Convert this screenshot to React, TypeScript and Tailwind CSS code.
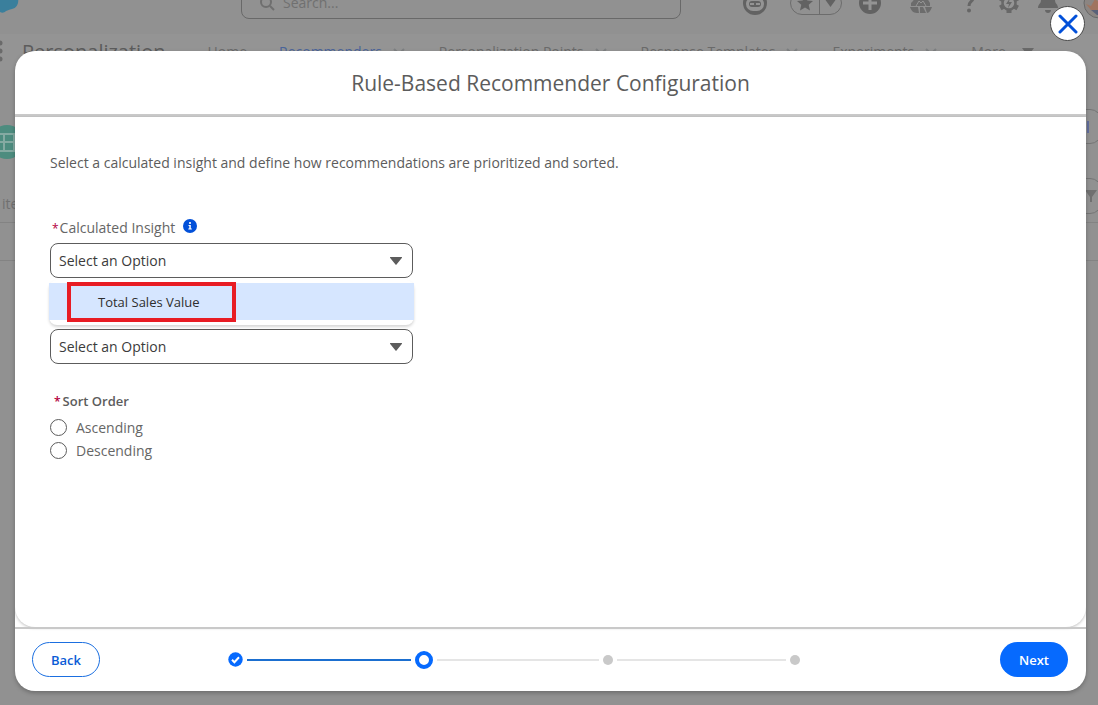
import React, { useState } from "react";

function Chevron() {
  return (
    <svg className="h-4 w-4 shrink-0" viewBox="0 0 16 16" fill="none" stroke="#7e8082" strokeWidth="2">
      <path d="M3 5l5 5 5-5" />
    </svg>
  );
}

function NavItem({ label, menu = true, active = false }: { label: string; menu?: boolean; active?: boolean }) {
  return (
    <a
      href="#"
      tabIndex={-1}
      className={
        active
          ? "flex shrink-0 items-center gap-[9px] text-sm text-[#4a649a]"
          : "flex shrink-0 items-center gap-[9px] text-sm text-[#6a6a6a]"
      }
    >
      {label}
      {menu && <Chevron />}
    </a>
  );
}

function GlobalHeader() {
  return (
    <header className="relative flex h-[62px] items-center justify-between pr-1 pl-[241px] text-[#626262]">
      <svg className="absolute top-[14px] left-0 h-7 w-5" viewBox="0 0 20 28">
        <path d="M0 12h18c1 5-1 10-6 11-3 1-4 1-6 2-2 2-4 2-6 1z" fill="#3a7f9c" />
      </svg>
      <div className="flex h-8 w-[440px] items-center gap-2 rounded-lg border border-[#696969] px-[17px]">
        <svg className="h-4 w-4 shrink-0" viewBox="0 0 16 16" fill="none" stroke="#6f6f6f" strokeWidth="2">
          <circle cx="7" cy="7" r="5" />
          <path d="M11 11l4 4" />
        </svg>
        <input
          aria-label="Search"
          tabIndex={-1}
          placeholder="Search..."
          className="w-full bg-transparent text-sm outline-none placeholder:text-[#707070]"
        />
      </div>
      <div className="flex items-center">
        <svg className="mr-[22px] h-[26px] w-[26px]" viewBox="0 0 26 26">
          <circle cx="13" cy="13" r="12" fill="#626262" />
          <rect x="4" y="7" width="18" height="14" rx="7" fill="#949494" />
          <rect x="7" y="11" width="12" height="6" rx="3" fill="#626262" />
          <path d="M8 13h4v2H8zM14 13h4v2h-4z" fill="#949494" />
        </svg>
        <div className="mr-4 flex h-[24px] w-[52px] items-center rounded-full border border-[#6c6c6c]">
          <svg className="h-full w-[29px] border-r border-[#6c6c6c] p-[3px]" viewBox="0 0 16 16" fill="#626262">
            <path d="M8 0l2.3 5.4 5.7.5-4.3 3.8L13 15.5 8 12.4 3 15.5l1.300-5.800L0 5.900l5.700-.5z" />
          </svg>
          <svg className="h-4 w-[21px]" viewBox="0 0 20 16" fill="#626262">
            <path d="M5 5h10l-5 7z" />
          </svg>
        </div>
        <svg className="mr-[27px] h-6 w-6" viewBox="0 0 24 24">
          <circle cx="12" cy="12" r="11" fill="#626262" />
          <path d="M12 5v14M5 12h14" stroke="#949494" strokeWidth="3" />
        </svg>
        <svg className="mr-[27px] h-6 w-6" viewBox="0 0 24 24" fill="#6c6c6c">
          <path d="M4 10l5-7 3 4 3-5 6 10v3H2v-3z" />
          <path d="M1 16h8l1 6H8c-4 0-6-3-7-6zM11 16h3l3 6h-6zM16 16h7c-1 3-3 6-5 6z" />
          <path d="M7 15l3-5 2 2 2-2 3 5" stroke="#949494" fill="none" />
        </svg>
        <svg className="mr-[21px] h-5 w-4" viewBox="0 0 16 20">
          <path d="M4 5c0-5 9-4 9 0 0 4-4 3-4 8" fill="none" stroke="#666" strokeWidth="3" />
          <circle cx="9" cy="17.500" r="2" fill="#666" />
        </svg>
        <svg className="mr-[15px] h-6 w-6" viewBox="0 0 24 24">
          <g stroke="#686868" strokeWidth="5">
            <path d="M12 2v20M3.300 7l17.400 10M3.300 17L20.700 7" />
          </g>
          <circle cx="12" cy="12" r="6.500" fill="#949494" stroke="#686868" strokeWidth="2.500" />
          <path d="M13 7l-4 6h3l-1 4 4-6h-3z" fill="#686868" />
        </svg>
        <svg className="mr-[23px] h-6 w-6" viewBox="0 0 24 24" fill="#666">
          <path d="M12 0c-6 0-7 5-7 9 0 4-3 4-3 8h20c0-4-3-4-3-8 0-4-1-9-7-9zM9 19h6c0 4-6 4-6 0z" />
        </svg>
        <svg className="-mr-[21px] h-8 w-8" viewBox="0 0 32 32">
          <circle cx="16" cy="16" r="15" fill="#8b8582" stroke="#686868" />
          <path d="M3 17l5 2 4-7 4 3 6-5v13H8z" fill="#a0745f" />
          <path d="M8 23h18v5H14z" fill="#5a6178" />
        </svg>
      </div>
    </header>
  );
}

function Backdrop() {
  return (
    <div aria-hidden="true" className="absolute inset-0 overflow-hidden bg-[#919191]">
      <div className="-mt-7">
        <GlobalHeader />
        <nav className="flex h-9 items-center gap-8 bg-[#949494]">
          <div className="flex shrink-0 items-center">
            <svg className="h-6 w-[22px]" viewBox="0 0 22 24" fill="#6a6a6a">
              <circle cx="0" cy="3" r="2.500" />
              <circle cx="0" cy="11" r="2.500" />
              <circle cx="0" cy="19" r="2.500" />
            </svg>
            <span className="mr-[10px] text-xl text-[#5c5c5c]">Personalization</span>
          </div>
          <NavItem label="Home" menu={false} />
          <NavItem label="Recommenders" active />
          <NavItem label="Personalization Points" />
          <NavItem label="Response Templates" />
          <NavItem label="Experiments" />
          <div className="flex shrink-0 items-center gap-[14px] text-sm text-[#6a6a6a]">
            More
            <svg className="h-4 w-4" viewBox="0 0 16 16" fill="#6a6a6a">
              <path d="M2 4h12l-6 8z" />
            </svg>
          </div>
        </nav>
      </div>
      <div className="mt-[39px] flex h-[51px] items-start justify-between">
        <svg className="h-9 w-6 self-end" viewBox="0 0 24 36">
          <circle cx="7" cy="18" r="17" fill="#4d8c7f" />
          <path d="M-6 10h20v17H-6zM4 10v17M-6 18h20" fill="none" stroke="#84aaa2" strokeWidth="2" />
        </svg>
        <div className="-mr-1 flex h-[35px] w-16 items-center justify-end rounded-xl border border-[#757575] pr-3">
          <span className="h-3 w-0.5 bg-[#626d9c]" />
        </div>
      </div>
      <div className="mt-[18px] flex h-9 items-center justify-between">
        <span className="mt-4 pl-0.5 text-sm text-[#707070]">items</span>
        <div className="-mr-1 flex h-9 w-16 items-center justify-end rounded-xl border border-[#757575] pr-1">
          <svg className="h-3 w-3" viewBox="0 0 12 12" fill="#707070">
            <path d="M0 0h12L7 7v5H5V7z" />
          </svg>
        </div>
      </div>
      <div className="mt-2 h-[39px] border-y border-[#838383]" />
    </div>
  );
}

function OptionSelect({ id, label }: { id: string; label?: string }) {
  return (
    <div className="relative">
      <select
        id={id}
        aria-label={label}
        defaultValue=""
        className="block h-[35px] w-full appearance-none rounded-lg border border-[#5c5c5c] bg-white px-2 text-sm text-[#3b3b3b] outline-none"
      >
        <option value="">Select an Option</option>
        <option value="tsv">Total Sales Value</option>
      </select>
      <svg className="pointer-events-none absolute top-[14px] right-[11px] h-2 w-3" viewBox="0 0 12 8" fill="#5c5c5c">
        <path d="M0.500 0h11c.5 0 .7.500.3.900L6.500 7.600c-.3.400-.7.400-1 0L.2.900C-.2.500 0 0 .500 0z" />
      </svg>
    </div>
  );
}

function Radio({ label, checked, onChange }: { label: string; checked: boolean; onChange: () => void }) {
  return (
    <label className="flex h-[23px] items-center gap-[9px] text-sm text-[#666]">
      <input
        type="radio"
        name="sort-order"
        checked={checked}
        onChange={onChange}
        className="h-[17px] w-[17px] appearance-none rounded-full border border-[#5c5c5c] bg-white checked:border-4 checked:border-[#0176d3]"
      />
      {label}
    </label>
  );
}

function Progress() {
  return (
    <ol aria-label="Progress" className="mr-[200px] ml-32 flex flex-1 items-center">
      <li className="flex flex-1 items-center">
        <svg className="h-[15px] w-[15px] shrink-0" viewBox="0 0 15 15">
          <circle cx="7.500" cy="7.500" r="7.200" fill="#066afe" />
          <path d="M4 7.800l2.400 2.400 4.600-4.900" fill="none" stroke="#fff" strokeWidth="2" />
        </svg>
        <span className="mx-1 h-0.5 flex-1 bg-[#1b6fd0]" />
      </li>
      <li className="flex flex-1 items-center">
        <span className="h-[18px] w-[18px] shrink-0 rounded-full border-4 border-[#066afe]" />
        <span className="mx-1 h-0.5 flex-1 bg-[#e5e5e5]" />
      </li>
      <li className="flex flex-1 items-center">
        <span className="h-[10px] w-[10px] shrink-0 rounded-full bg-[#c9c9c9]" />
        <span className="mx-1 h-0.5 flex-1 bg-[#e5e5e5]" />
      </li>
      <li className="h-[10px] w-[10px] rounded-full bg-[#c9c9c9]" />
    </ol>
  );
}

export default function App() {
  const [order, setOrder] = useState("");
  return (
    <div className="relative flex min-h-screen flex-col overflow-hidden font-['Open_Sans',sans-serif]">
      <Backdrop />
      <div className="relative flex flex-1 flex-col pr-3 pb-[14px] pl-[15px]">
        <button
          aria-label="Close"
          className="mt-[6px] mr-px mb-[10px] flex h-[35px] w-[35px] items-center justify-center self-end rounded-full border border-[#4a4a4a] bg-white"
        >
          <svg className="h-5 w-5" viewBox="0 0 20 20" stroke="#0250d9" strokeWidth="3" strokeLinecap="round">
            <path d="M2 2l16 16M18 2L2 18" />
          </svg>
        </button>
        <section
          role="dialog"
          aria-labelledby="dialog-title"
          className="flex flex-1 flex-col overflow-hidden rounded-[20px] bg-white shadow-[0_2px_4px_rgba(0,0,0,0.25)]"
        >
          <header className="flex h-[66px] items-center justify-center border-b-3 border-[#c9c9c9] pt-0.5">
            <h1 id="dialog-title" className="text-[21px] text-[#5c5c5c]">
              Rule-Based Recommender Configuration
            </h1>
          </header>
          <div className="flex-1 rounded-b-[20px] px-[35px] pt-9 shadow-[0_1px_3px_rgba(0,0,0,0.25)]">
            <p className="text-sm leading-5 text-[#5c5c5c]">
              Select a calculated insight and define how recommendations are prioritized and sorted.
            </p>
            <div className="mt-[45px] w-[363px]">
              <div className="flex h-[25px] items-start gap-2 pl-0.5">
                <label htmlFor="insight" className="text-sm leading-5 text-[#666]">
                  <span className="mr-px text-xs text-[#b4003c]">*</span>Calculated Insight
                </label>
                <svg className="mt-px h-[14px] w-[14px]" viewBox="0 0 14 14">
                  <circle cx="7" cy="7" r="7" fill="#0250d9" />
                  <circle cx="7" cy="4" r="1.100" fill="#fff" />
                  <path d="M5.500 6h2.300v3.500h1v1H5.300v-1h1V7h-.8z" fill="#fff" />
                </svg>
              </div>
              <div className="relative">
                <OptionSelect id="insight" />
                <ul
                  role="listbox"
                  aria-label="Calculated Insight"
                  className="absolute inset-x-[-1px] top-[37px] z-10 rounded-lg bg-white pt-[3px] pb-[5px] shadow-[0_2px_3px_rgba(0,0,0,0.16)]"
                >
                  <li
                    role="option"
                    aria-selected="true"
                    className="relative flex h-[37px] items-center bg-[#d6e6ff] pt-0.5 pl-[49px] text-[13px] text-[#2e2e2e]"
                  >
                    Total Sales Value
                    <span className="absolute -top-px left-[18px] h-10 w-[169px] border-4 border-[#e81c24]" />
                  </li>
                </ul>
              </div>
              <div className="mt-[51px]">
                <OptionSelect id="priority" label="Prioritize By" />
              </div>
            </div>
            <fieldset className="mt-[27px]">
              <legend className="pb-[5px] pl-1 text-[13px] leading-5 font-semibold text-[#5c5c5c]">
                <span className="mr-0.5 text-xs text-[#b4003c]">*</span>Sort Order
              </legend>
              <Radio label="Ascending" checked={order === "asc"} onChange={() => setOrder("asc")} />
              <Radio label="Descending" checked={order === "desc"} onChange={() => setOrder("desc")} />
            </fieldset>
          </div>
          <footer className="flex h-16 items-center border-t-2 border-[#c9c9c9] pr-[18px] pb-px pl-[17px]">
            <button className="h-[35px] w-[68px] rounded-full border border-[#1b6fe0] pt-0.5 text-[13px] font-semibold text-[#0b5cd6]">
              Back
            </button>
            <Progress />
            <button className="h-[35px] w-[68px] rounded-full bg-[#066afe] pt-0.5 text-[13px] font-semibold text-white">
              Next
            </button>
          </footer>
        </section>
      </div>
    </div>
  );
}
